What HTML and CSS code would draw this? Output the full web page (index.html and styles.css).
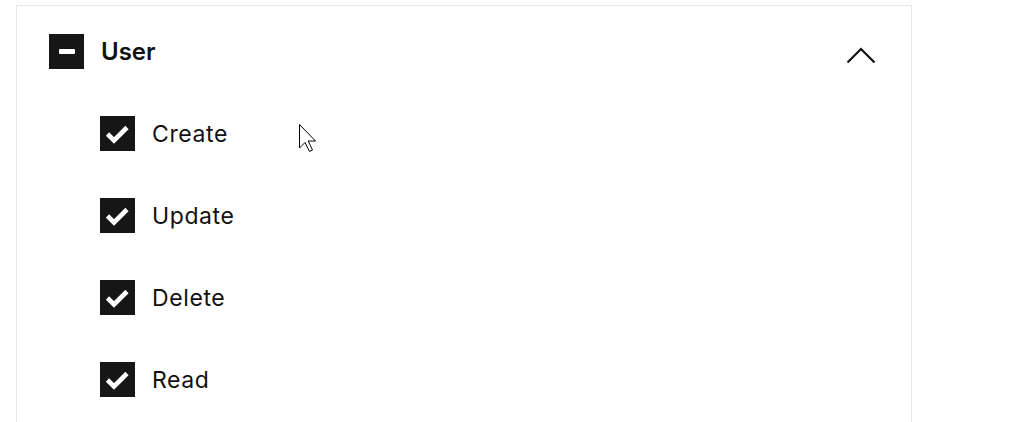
FILE: index.html
```html
<!DOCTYPE html>
<html lang="en">
<head>
    <meta charset="UTF-8">
    <meta name="viewport" content="width=device-width, initial-scale=1.0">
    <title>Permissions</title>
    <link rel="stylesheet" href="styles.css">
</head>
<body>
    <div class="page">
        <!-- Permission group panel -->
        <div class="panel">
            <div class="group-header">
                <span class="box minus"><span class="bar"></span></span>
                <span class="group-title">User</span>
                <svg class="chevron" width="32" height="20" viewBox="0 0 32 20">
                    <path d="M2.5 17.5 L16 4 L29.5 17.5" fill="none" stroke="#111" stroke-width="2.2"/>
                </svg>
            </div>

            <ul class="perm-list">
                <li class="perm">
                    <span class="box">
                        <svg width="35" height="35" viewBox="0 0 35 35"><path d="M7.5 18 L14 24.5 L27 11.5" fill="none" stroke="#fff" stroke-width="4.6"/></svg>
                    </span>
                    <span class="perm-label">Create</span>
                </li>
                <li class="perm">
                    <span class="box">
                        <svg width="35" height="35" viewBox="0 0 35 35"><path d="M7.5 18 L14 24.5 L27 11.5" fill="none" stroke="#fff" stroke-width="4.6"/></svg>
                    </span>
                    <span class="perm-label">Update</span>
                </li>
                <li class="perm">
                    <span class="box">
                        <svg width="35" height="35" viewBox="0 0 35 35"><path d="M7.5 18 L14 24.5 L27 11.5" fill="none" stroke="#fff" stroke-width="4.6"/></svg>
                    </span>
                    <span class="perm-label">Delete</span>
                </li>
                <li class="perm">
                    <span class="box">
                        <svg width="35" height="35" viewBox="0 0 35 35"><path d="M7.5 18 L14 24.5 L27 11.5" fill="none" stroke="#fff" stroke-width="4.6"/></svg>
                    </span>
                    <span class="perm-label">Read</span>
                </li>
            </ul>
        </div>
    </div>

    <!-- Mouse pointer caught in the screenshot -->
    <svg class="cursor" width="20" height="30" viewBox="0 0 20 30">
        <path d="M0.5 0.5 L0.5 24 L6 18.5 L10.5 27.5 L13.5 26 L9.2 17 L16.5 17 Z" fill="#fff" stroke="#000" stroke-width="1"/>
    </svg>
</body>
</html>
```

FILE: styles.css
```css
body {
    margin: 0;
    padding: 0;
    background: #fff;
    color: #111;
    font-family: 'Inter', 'Liberation Sans', sans-serif;
    overflow: hidden;
}

.page {
    padding: 5px 0 0 16px;
}

/* Panel with light grey frame, runs past the bottom edge */
.panel {
    width: 894px;
    height: 389px;
    border: 1px solid #e8e8e8;
    border-bottom: none;
    padding: 28px 0 0 0;
}

.group-header {
    display: flex;
    align-items: center;
    height: 35px;
    padding: 0 34px 0 32px;
}

.box {
    width: 35px;
    height: 35px;
    background: #161616;
    display: flex;
    align-items: center;
    justify-content: center;
    flex-shrink: 0;
}

.box svg {
    display: block;
}

.minus .bar {
    width: 16px;
    height: 5px;
    background: #fff;
    border-radius: 1px;
}

.group-title {
    margin-left: 17px;
    font-size: 24px;
    font-weight: 600;
    flex: 1;
}

.chevron {
    margin-top: 6px;
}

.perm-list {
    list-style: none;
    margin: 0;
    padding: 47px 0 0 83px;
    display: flex;
    flex-direction: column;
    gap: 47px;
}

.perm {
    display: flex;
    align-items: center;
    height: 35px;
}

.perm-label {
    margin-left: 17px;
    font-size: 23px;
    letter-spacing: 0.6px;
}

.cursor {
    position: absolute;
    left: 299px;
    top: 124px;
}
```
